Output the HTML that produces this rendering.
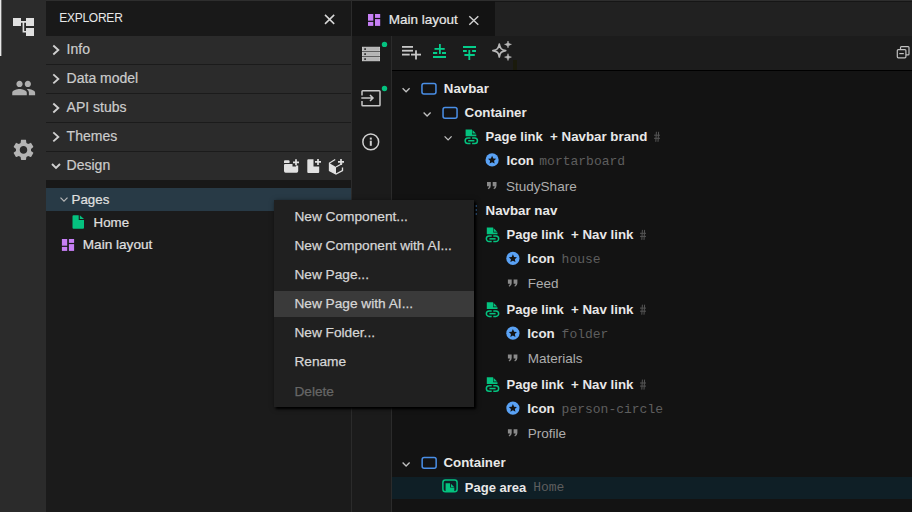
<!DOCTYPE html>
<html><head><meta charset="utf-8">
<style>
*{box-sizing:border-box;margin:0;padding:0}
html,body{width:912px;height:512px;overflow:hidden;background:#131313;font-family:"Liberation Sans",sans-serif;position:relative}
.a{position:absolute}
.t{position:absolute;white-space:pre;line-height:1;}
svg{position:absolute;overflow:visible}
</style></head><body>
<div class="a" style="left:0px;top:0px;width:912px;height:1px;background:#2e2e2e;"></div>
<div class="a" style="left:0px;top:0px;width:46px;height:512px;background:#2b2b2b;"></div>
<div class="a" style="left:0px;top:0px;width:1px;height:56px;background:#e8e8e8;"></div>
<div class="a" style="left:1px;top:0px;width:1px;height:56px;background:rgba(232,232,232,0.35);"></div>
<div class="a" style="left:46px;top:1px;width:305px;height:511px;background:#1b1b1b;"></div>
<div class="a" style="left:46px;top:1px;width:305px;height:35px;background:#191919;"></div>
<div class="a" style="left:46px;top:36px;width:305px;height:28px;background:#2b2b2b;"></div>
<div class="a" style="left:46px;top:65px;width:305px;height:28px;background:#2b2b2b;"></div>
<div class="a" style="left:46px;top:94px;width:305px;height:28px;background:#2b2b2b;"></div>
<div class="a" style="left:46px;top:123px;width:305px;height:28px;background:#2b2b2b;"></div>
<div class="a" style="left:46px;top:152px;width:305px;height:28px;background:#2b2b2b;"></div>
<div class="a" style="left:46px;top:180px;width:305px;height:8px;background:#181818;"></div>
<div class="a" style="left:46px;top:188px;width:305px;height:23px;background:#283a46;"></div>
<div class="a" style="left:351px;top:0px;width:1px;height:512px;background:#2b2b2b;"></div>
<div class="a" style="left:352px;top:1px;width:560px;height:35px;background:#212121;"></div>
<div class="a" style="left:352px;top:1px;width:560px;height:1px;background:#161616;"></div>
<div class="a" style="left:352px;top:1px;width:143px;height:35px;background:#131313;"></div>
<div class="a" style="left:352px;top:36px;width:39px;height:476px;background:#1b1b1b;"></div>
<div class="a" style="left:391px;top:36px;width:1px;height:476px;background:#2b2b2b;"></div>
<div class="a" style="left:392px;top:36px;width:520px;height:34px;background:#1c1c1c;"></div>
<div class="a" style="left:392px;top:70px;width:520px;height:1px;background:#000;"></div>
<div class="a" style="left:392px;top:477px;width:520px;height:22px;background:#0f1f26;"></div>
<svg style="left:0;top:0" width="46" height="46" viewBox="0 0 46 46">
<g fill="#e0e0e0"><rect x="13" y="18" width="8" height="8"/><rect x="26" y="18" width="8" height="8"/><rect x="26" y="28" width="8" height="8"/></g>
<path d="M21 21.9H26M23.4 21.9V31.8H26" stroke="#e0e0e0" stroke-width="1.6" fill="none"/>
</svg>
<svg style="left:0;top:60px" width="46" height="46" viewBox="0 60 46 46"><g transform="translate(11.2,75.6) scale(1.04)" fill="#b0b0b0">
<path d="M16 11c1.66 0 2.99-1.34 2.99-3S17.66 5 16 5c-1.66 0-3 1.34-3 3s1.34 3 3 3zm-8 0c1.66 0 2.99-1.34 2.99-3S9.66 5 8 5C6.34 5 5 6.34 5 8s1.34 3 3 3zm0 2c-2.33 0-7 1.17-7 3.5V19h14v-2.5c0-2.330-4.67-3.5-7-3.5zm8 0c-.29 0-.62.02-.97.05 1.16.84 1.970 1.97 1.97 3.45V19h6v-2.5c0-2.33-4.67-3.5-7-3.5z"/></g></svg>
<svg style="left:0;top:130px" width="46" height="46" viewBox="0 130 46 46"><g transform="translate(10.9,137.3) scale(1.05)" fill="#b4b4b4">
<path d="M19.14 12.94c.04-.3.06-.61.06-.94 0-.32-.02-.64-.07-.94l2.03-1.58c.18-.14.23-.41.12-.61l-1.92-3.32c-.12-.22-.37-.29-.59-.22l-2.39.96c-.5-.38-1.030-.7-1.62-.94l-.36-2.54c-.04-.24-.24-.41-.48-.41h-3.84c-.24 0-.43.17-.47.41l-.36 2.54c-.59.24-1.13.57-1.62.94l-2.39-.96c-.22-.08-.47 0-.59.22L2.74 8.87c-.12.21-.08.47.12.61l2.03 1.58c-.05.3-.09.63-.09.94s.02.64.07.94l-2.03 1.58c-.18.14-.23.41-.12.61l1.92 3.32c.12.22.37.29.59.22l2.39-.96c.5.38 1.03.7 1.62.94l.36 2.54c.05.24.24.41.48.41h3.84c.24 0 .44-.17.47-.41l.36-2.54c.59-.24 1.13-.56 1.62-.94l2.39.96c.22.08.47 0 .59-.22l1.92-3.32c.12-.22.07-.47-.12-.61l-2.01-1.58zM12 15.6c-1.98 0-3.6-1.62-3.6-3.6s1.62-3.6 3.6-3.6 3.6 1.62 3.6 3.6-1.62 3.6-3.6 3.6z"/></g></svg>
<div class="t" style="left:59.20px;top:11.60px;font-size:12px;color:#e8e8e8;letter-spacing:-0.25px;">EXPLORER</div>
<svg style="left:0;top:0" width="351" height="40"><path d="M325 14.9L334.2 23.9M334.2 14.9L325 23.9" stroke="#d8d8d8" stroke-width="1.5"/></svg>
<div class="t" style="left:66.60px;top:41.90px;font-size:14px;color:#cccccc;-webkit-text-stroke:0.2px currentColor;">Info</div>
<svg style="left:0;top:0" width="70" height="63"><path d="M53.3 45.5L58.3 50.0L53.3 54.5" stroke="#d0d0d0" stroke-width="1.9" fill="none"/></svg>
<div class="t" style="left:66.60px;top:70.80px;font-size:14px;color:#cccccc;-webkit-text-stroke:0.2px currentColor;">Data model</div>
<svg style="left:0;top:0" width="70" height="92"><path d="M53.3 74.4L58.3 78.9L53.3 83.4" stroke="#d0d0d0" stroke-width="1.9" fill="none"/></svg>
<div class="t" style="left:66.60px;top:99.90px;font-size:14px;color:#cccccc;-webkit-text-stroke:0.2px currentColor;">API stubs</div>
<svg style="left:0;top:0" width="70" height="121"><path d="M53.3 103.5L58.3 108.0L53.3 112.5" stroke="#d0d0d0" stroke-width="1.9" fill="none"/></svg>
<div class="t" style="left:66.60px;top:128.80px;font-size:14px;color:#cccccc;-webkit-text-stroke:0.2px currentColor;">Themes</div>
<svg style="left:0;top:0" width="70" height="150"><path d="M53.3 132.4L58.3 136.9L53.3 141.4" stroke="#d0d0d0" stroke-width="1.9" fill="none"/></svg>
<div class="t" style="left:66.60px;top:158.10px;font-size:14px;color:#cccccc;-webkit-text-stroke:0.2px currentColor;">Design</div>
<svg style="left:0;top:0" width="70" height="180"><path d="M52 164L56 168L60 164" stroke="#d0d0d0" stroke-width="1.9" fill="none"/></svg>
<svg style="left:276px;top:152px" width="75" height="28" viewBox="276 152 75 28" fill="#e0e0e0">
<path d="M284 161.2q0-1 1-1h3.5q1 0 1 1v1.8h-5.5z"/>
<path d="M284 165q0-1 1-1h7.5v2.6h3.5v-1.2h2.2v5.7q0 1.6-1.6 1.6h-11q-1.6 0-1.6-1.6z"/>
<path d="M296 159.3v6M293 162.3h6" stroke="#e0e0e0" stroke-width="1.7"/>
<path d="M307.3 160.2q0-1 1-1h5.2v7.3h5.7v5.5q0 1-1 1h-9.9q-1 0-1-1z"/>
<path d="M318 158.9v6M315 161.9h6" stroke="#e0e0e0" stroke-width="1.7"/>
<path d="M335.2 159.5L329.5 163v7.5l6.5 3.5l6.5-3.5v-3" stroke="#e0e0e0" stroke-width="1.3" fill="none"/>
<path d="M329.5 163.3l6.5 3.6v7.1l-6.5-3.5z"/>
<path d="M336 167l6.3-3.5" stroke="#e0e0e0" stroke-width="1.2" fill="none"/>
<path d="M341 158.9v6M338 161.9h6" stroke="#e0e0e0" stroke-width="1.7"/>
</svg>
<svg style="left:0;top:0" width="90" height="260"><path d="M60.5 197.6L64 201.2L67.5 197.6" stroke="#b8b8b8" stroke-width="1.2" fill="none"/></svg>
<div class="t" style="left:71.60px;top:192.89px;font-size:13.3px;color:#e0e0e0;-webkit-text-stroke:0.2px currentColor;">Pages</div>
<svg style="left:0;top:0" width="90" height="260" fill="#04c27f">
<path d="M73.5 215.3h5.2v4.8h5.3v7.7q0 1-1 1h-9.5q-1 0-1-1v-11.5q0-1 1-1z"/>
<path d="M79.8 215.3l4.2 3.8h-4.2z"/></svg>
<div class="t" style="left:93.60px;top:215.59px;font-size:13.3px;color:#e0e0e0;-webkit-text-stroke:0.2px currentColor;">Home</div>
<svg style="left:0;top:0" width="75" height="253" fill="#c77ff5">
<rect x="61.9" y="239" width="5.3" height="6.7"/><rect x="68.9" y="239" width="5.2" height="3.9"/>
<rect x="61.9" y="246.9" width="5.3" height="4"/><rect x="68.9" y="244.1" width="5.2" height="6.8"/></svg>
<div class="t" style="left:82.80px;top:237.94px;font-size:13.6px;color:#e0e0e0;-webkit-text-stroke:0.2px currentColor;">Main layout</div>
<svg style="left:0;top:0" width="382" height="28" fill="#c77ff5">
<rect x="368" y="14" width="5.3" height="6.7"/><rect x="375" y="14" width="5.2" height="3.9"/>
<rect x="368" y="21.9" width="5.3" height="4"/><rect x="375" y="19.1" width="5.2" height="6.8"/></svg>
<div class="t" style="left:388.80px;top:12.72px;font-size:13.5px;color:#e8e8e8;-webkit-text-stroke:0.2px currentColor;">Main layout</div>
<svg style="left:0;top:0" width="490" height="40"><path d="M469.3 16.2L478.3 24.8M478.3 16.2L469.3 24.8" stroke="#d0d0d0" stroke-width="1.4"/></svg>
<svg style="left:352px;top:36px" width="40" height="120" viewBox="352 36 40 120">
<g fill="#b4b4b4" stroke="#d0d0d0" stroke-width="0.8">
<rect x="362.4" y="47.2" width="17.2" height="3.6"/><rect x="362.4" y="52.2" width="17.2" height="3.6"/><rect x="362.4" y="57.2" width="17.2" height="3.6"/></g>
<g fill="#1b1b1b"><rect x="364.3" y="48.3" width="1.6" height="1.6"/><rect x="364.3" y="53.3" width="1.6" height="1.6"/><rect x="364.3" y="58.3" width="1.6" height="1.6"/></g>
<circle cx="384.5" cy="44.4" r="2.7" fill="#04c27f"/>
<circle cx="384.5" cy="88.5" r="2.7" fill="#04c27f"/>
<path d="M362 95.5V91.5q0-0.8 0.8-0.8h16.4q0.8 0 .8.8v13.5q0 .8-.8.8h-16.4q-.8 0-.8-.8v-4" stroke="#c8c8c8" stroke-width="1.5" fill="none"/>
<path d="M361.3 98H373M370 95l3 3l-3 3" stroke="#c8c8c8" stroke-width="1.5" fill="none"/>
<circle cx="370.75" cy="141.9" r="7.9" stroke="#d0d0d0" stroke-width="1.5" fill="none"/>
<rect x="369.8" y="137.6" width="2" height="2" fill="#d0d0d0"/><rect x="369.8" y="140.7" width="2" height="5.1" fill="#d0d0d0"/>
</svg>
<svg style="left:392px;top:36px" width="520" height="34" viewBox="392 36 520 34">
<g fill="#c8c8c8"><rect x="402" y="46" width="11" height="1.8"/><rect x="402" y="49.8" width="11" height="1.8"/><rect x="402" y="53.7" width="7.7" height="1.8"/><rect x="411" y="53.7" width="10" height="1.8"/><rect x="415.1" y="50.3" width="1.8" height="9.2"/></g>
<g fill="#05cd8b"><rect x="439" y="44" width="1.8" height="10"/><rect x="434.5" y="48" width="10.2" height="1.8"/><rect x="433" y="52" width="4.2" height="2"/><rect x="442" y="52" width="4" height="2"/><rect x="433" y="56" width="13" height="2"/>
<rect x="463" y="46" width="13" height="2"/><rect x="463" y="50" width="3.8" height="2"/><rect x="472.1" y="50" width="3.9" height="2"/><rect x="464.4" y="54" width="10.4" height="2"/><rect x="468.4" y="50" width="1.8" height="10"/></g>
<path d="M499.3 44.2C500 48.5 501.4 49.9 505.7 50.6C501.4 51.3 500 52.7 499.3 57C498.6 52.7 497.2 51.3 492.9 50.6C497.2 49.9 498.6 48.5 499.3 44.2Z" stroke="#b8b8b8" stroke-width="1.7" fill="none" stroke-linejoin="round"/>
<path d="M508 41C508.4 43.3 509.1 44 511.4 44.4C509.1 44.8 508.4 45.5 508 47.8C507.6 45.5 506.9 44.8 504.6 44.4C506.9 44 507.6 43.3 508 41Z" fill="#b8b8b8" stroke="#b8b8b8" stroke-width="0.6"/>
<path d="M508 53.7C508.4 56 509.1 56.7 511.4 57.1C509.1 57.5 508.4 58.2 508 60.5C507.6 58.2 506.9 57.5 504.6 57.1C506.9 56.7 507.6 56 508 53.7Z" fill="#b8b8b8" stroke="#b8b8b8" stroke-width="0.6"/>
<rect x="513" y="60" width="4" height="10" fill="#1a1a0c"/>
<g stroke="#c0c0c0" stroke-width="1.2" fill="none"><path d="M900.5 49V47.5q0-.9.9-.9h6.7q.9 0 .9.9v6.5q0 .9-.9.9H906"/><rect x="897.3" y="49.6" width="8.6" height="8.2" rx="1"/><path d="M899.3 53.6h4.5"/></g>
</svg>
<svg style="left:0;top:0" width="414" height="98"><path d="M402.6 88.3L406.1 91.8L409.6 88.3" stroke="#c0c0c0" stroke-width="1.3" fill="none"/></svg>
<svg style="left:0;top:0" width="439" height="98"><rect x="421.95" y="83.40" width="14" height="10.6" rx="2" stroke="#4a8fe7" stroke-width="1.5" fill="none"/></svg>
<div class="t" style="left:443.80px;top:82.00px;font-size:13.3px;color:#e8e8e8;font-weight:700;">Navbar</div>
<svg style="left:0;top:0" width="435" height="122"><path d="M423.6 112.5L427.1 116.0L430.6 112.5" stroke="#c0c0c0" stroke-width="1.3" fill="none"/></svg>
<svg style="left:0;top:0" width="460" height="122"><rect x="443.05" y="107.60" width="14" height="10.6" rx="2" stroke="#4a8fe7" stroke-width="1.5" fill="none"/></svg>
<div class="t" style="left:464.60px;top:106.19px;font-size:13.3px;color:#e8e8e8;font-weight:700;">Container</div>
<svg style="left:0;top:0" width="456" height="146"><path d="M444.6 136.4L448.1 139.9L451.6 136.4" stroke="#c0c0c0" stroke-width="1.3" fill="none"/></svg>
<svg style="left:0;top:0" width="482" height="146" fill="#04c27f">
<path d="M465.59999999999997 129.4h6.4v5h4.3v1.8h-10.7z"/>
<path d="M472.5 130.1l3.5 3.5h-3.5z"/>
<path d="M470.5 138.0h-2.6a2.75 2.75 0 0 0 0 5.5h2.6M472.09999999999997 138.0h2.6a2.75 2.75 0 0 1 0 5.5h-2.6" stroke="#04c27f" stroke-width="1.5" fill="none"/>
<rect x="468.2" y="140.00" width="6.2" height="1.5"/></svg>
<div class="t" style="left:485.60px;top:130.35px;font-size:13px;color:#e8e8e8;font-weight:700;">Page link</div>
<div class="t" style="left:550.10px;top:130.09px;font-size:13.3px;color:#e8e8e8;font-weight:700;">+ Navbar brand</div>
<svg style="left:0;top:0" width="664" height="146"><path d="M656.4 131.8L655.8 141.8M658.6 131.8L658 141.8M654 135.20000000000002H660M654 138.3H660" stroke="#555" stroke-width="1" fill="none"/></svg>
<svg style="left:0;top:0" width="501" height="170"><circle cx="492.1" cy="159.90" r="6.6" fill="#5aa2f5"/><polygon points="492.10,155.80 493.30,158.44 496.19,158.77 494.05,160.73 494.63,163.58 492.10,162.15 489.57,163.58 490.15,160.73 488.01,158.77 490.90,158.44" fill="#131313"/></svg>
<div class="t" style="left:506.60px;top:153.79px;font-size:13.3px;color:#e8e8e8;font-weight:700;">Icon</div>
<div class="t" style="left:539.30px;top:154.93px;font-size:13px;color:#5e5e5e;font-family:'Liberation Mono',monospace;">mortarboard</div>
<svg style="left:0;top:0" width="501" height="196" fill="#8a8a8a">
<path d="M487 182.1h3.8v3.6q0 2.6-2.4 3.6l-.7-1q1.2-.8 1.3-2.1h-2z"/>
<path d="M492.7 182.1h3.8v3.6q0 2.6-2.4 3.6l-.7-1q1.2-.8 1.3-2.1h-2z"/></svg>
<div class="t" style="left:506.10px;top:179.53px;font-size:13.5px;color:#adadad;">StudyShare</div>
<div class="t" style="left:485.60px;top:204.49px;font-size:13.3px;color:#e8e8e8;font-weight:700;">Navbar nav</div>
<svg style="left:0;top:0" width="480" height="220" fill="#3a6ea5"><rect x="475.2" y="205" width="1.8" height="2"/><rect x="475.2" y="209" width="1.8" height="2"/><rect x="475.2" y="213" width="1.8" height="2"/></svg>
<svg style="left:0;top:0" width="503" height="244" fill="#04c27f">
<path d="M486.79999999999995 227.5h6.4v5h4.3v1.8h-10.7z"/>
<path d="M493.7 228.2l3.5 3.5h-3.5z"/>
<path d="M491.7 236.1h-2.6a2.75 2.75 0 0 0 0 5.5h2.6M493.29999999999995 236.1h2.6a2.75 2.75 0 0 1 0 5.5h-2.6" stroke="#04c27f" stroke-width="1.5" fill="none"/>
<rect x="489.4" y="238.10" width="6.2" height="1.5"/></svg>
<div class="t" style="left:506.60px;top:228.45px;font-size:13px;color:#e8e8e8;font-weight:700;">Page link</div>
<div class="t" style="left:571.00px;top:228.19px;font-size:13.3px;color:#e8e8e8;font-weight:700;">+ Nav link</div>
<svg style="left:0;top:0" width="650" height="244"><path d="M642.4 229.9L641.8 239.9M644.6 229.9L644 239.9M640 233.3H646M640 236.4H646" stroke="#555" stroke-width="1" fill="none"/></svg>
<svg style="left:0;top:0" width="522" height="269"><circle cx="512.9" cy="258.40" r="6.6" fill="#5aa2f5"/><polygon points="512.90,254.30 514.10,256.94 516.99,257.27 514.85,259.23 515.43,262.08 512.90,260.65 510.37,262.08 510.95,259.23 508.81,257.27 511.70,256.94" fill="#131313"/></svg>
<div class="t" style="left:527.30px;top:252.30px;font-size:13.3px;color:#e8e8e8;font-weight:700;">Icon</div>
<div class="t" style="left:561.60px;top:253.43px;font-size:13px;color:#5e5e5e;font-family:'Liberation Mono',monospace;">house</div>
<svg style="left:0;top:0" width="521" height="293" fill="#8a8a8a">
<path d="M507.9 279.6h3.8v3.6q0 2.6-2.4 3.6l-.7-1q1.2-.8 1.3-2.1h-2z"/>
<path d="M513.6 279.6h3.8v3.6q0 2.6-2.4 3.6l-.7-1q1.2-.8 1.3-2.1h-2z"/></svg>
<div class="t" style="left:527.80px;top:277.02px;font-size:13.5px;color:#adadad;">Feed</div>
<svg style="left:0;top:0" width="503" height="319" fill="#04c27f">
<path d="M486.79999999999995 302.3h6.4v5h4.3v1.8h-10.7z"/>
<path d="M493.7 303.0l3.5 3.5h-3.5z"/>
<path d="M491.7 310.90000000000003h-2.6a2.75 2.75 0 0 0 0 5.5h2.6M493.29999999999995 310.90000000000003h2.6a2.75 2.75 0 0 1 0 5.5h-2.6" stroke="#04c27f" stroke-width="1.5" fill="none"/>
<rect x="489.4" y="312.90" width="6.2" height="1.5"/></svg>
<div class="t" style="left:506.60px;top:303.25px;font-size:13px;color:#e8e8e8;font-weight:700;">Page link</div>
<div class="t" style="left:571.00px;top:303.00px;font-size:13.3px;color:#e8e8e8;font-weight:700;">+ Nav link</div>
<svg style="left:0;top:0" width="650" height="319"><path d="M642.4 304.7L641.8 314.7M644.6 304.7L644 314.7M640 308.09999999999997H646M640 311.2H646" stroke="#555" stroke-width="1" fill="none"/></svg>
<svg style="left:0;top:0" width="522" height="343"><circle cx="512.9" cy="333.20" r="6.6" fill="#5aa2f5"/><polygon points="512.90,329.10 514.10,331.74 516.99,332.07 514.85,334.03 515.43,336.88 512.90,335.45 510.37,336.88 510.95,334.03 508.81,332.07 511.70,331.74" fill="#131313"/></svg>
<div class="t" style="left:527.30px;top:327.10px;font-size:13.3px;color:#e8e8e8;font-weight:700;">Icon</div>
<div class="t" style="left:561.60px;top:328.23px;font-size:13px;color:#5e5e5e;font-family:'Liberation Mono',monospace;">folder</div>
<svg style="left:0;top:0" width="521" height="368" fill="#8a8a8a">
<path d="M507.9 354.40000000000003h3.8v3.6q0 2.6-2.4 3.6l-.7-1q1.2-.8 1.3-2.1h-2z"/>
<path d="M513.6 354.40000000000003h3.8v3.6q0 2.6-2.4 3.6l-.7-1q1.2-.8 1.3-2.1h-2z"/></svg>
<div class="t" style="left:527.80px;top:351.82px;font-size:13.5px;color:#adadad;">Materials</div>
<svg style="left:0;top:0" width="503" height="394" fill="#04c27f">
<path d="M486.79999999999995 377.20000000000005h6.4v5h4.3v1.8h-10.7z"/>
<path d="M493.7 377.90000000000003l3.5 3.5h-3.5z"/>
<path d="M491.7 385.80000000000007h-2.6a2.75 2.75 0 0 0 0 5.5h2.6M493.29999999999995 385.80000000000007h2.6a2.75 2.75 0 0 1 0 5.5h-2.6" stroke="#04c27f" stroke-width="1.5" fill="none"/>
<rect x="489.4" y="387.80" width="6.2" height="1.5"/></svg>
<div class="t" style="left:506.60px;top:378.15px;font-size:13px;color:#e8e8e8;font-weight:700;">Page link</div>
<div class="t" style="left:571.00px;top:377.90px;font-size:13.3px;color:#e8e8e8;font-weight:700;">+ Nav link</div>
<svg style="left:0;top:0" width="650" height="394"><path d="M642.4 379.6L641.8 389.6M644.6 379.6L644 389.6M640 383.0H646M640 386.1H646" stroke="#555" stroke-width="1" fill="none"/></svg>
<svg style="left:0;top:0" width="522" height="418"><circle cx="512.9" cy="408.10" r="6.6" fill="#5aa2f5"/><polygon points="512.90,404.00 514.10,406.64 516.99,406.97 514.85,408.93 515.43,411.78 512.90,410.35 510.37,411.78 510.95,408.93 508.81,406.97 511.70,406.64" fill="#131313"/></svg>
<div class="t" style="left:527.30px;top:402.00px;font-size:13.3px;color:#e8e8e8;font-weight:700;">Icon</div>
<div class="t" style="left:561.60px;top:403.13px;font-size:13px;color:#5e5e5e;font-family:'Liberation Mono',monospace;">person-circle</div>
<svg style="left:0;top:0" width="521" height="443" fill="#8a8a8a">
<path d="M507.9 429.30000000000007h3.8v3.6q0 2.6-2.4 3.6l-.7-1q1.2-.8 1.3-2.1h-2z"/>
<path d="M513.6 429.30000000000007h3.8v3.6q0 2.6-2.4 3.6l-.7-1q1.2-.8 1.3-2.1h-2z"/></svg>
<div class="t" style="left:527.80px;top:426.73px;font-size:13.5px;color:#adadad;">Profile</div>
<svg style="left:0;top:0" width="414" height="472"><path d="M402.6 462.5L406.1 466.0L409.6 462.5" stroke="#c0c0c0" stroke-width="1.3" fill="none"/></svg>
<svg style="left:0;top:0" width="439" height="472"><rect x="422.15" y="457.60" width="14" height="10.6" rx="2" stroke="#4a8fe7" stroke-width="1.5" fill="none"/></svg>
<div class="t" style="left:443.50px;top:456.19px;font-size:13.3px;color:#e8e8e8;font-weight:700;">Container</div>
<svg style="left:0;top:0" width="470" height="500">
<rect x="442.9" y="479.9" width="14.2" height="11.9" rx="2.5" stroke="#04c27f" stroke-width="1.5" fill="none"/>
<path d="M445.6 483.3h4.4v4.1h4.3v4.5h-8.7z" fill="#04c27f"/><path d="M450.9 483.8l3.2 3.1h-3.2z" fill="#04c27f"/></svg>
<div class="t" style="left:464.80px;top:480.55px;font-size:13px;color:#e8e8e8;font-weight:700;">Page area</div>
<div class="t" style="left:533.20px;top:481.43px;font-size:13px;color:#5e5e5e;font-family:'Liberation Mono',monospace;">Home</div>
<div class="a" style="left:274px;top:200px;width:200px;height:207px;background:#202020;box-shadow:2px 2px 2px rgba(0,0,0,1),1px 1px 5px rgba(0,0,0,0.5);"></div>
<div class="a" style="left:274px;top:291px;width:200px;height:26px;background:#3a3a3a;"></div>
<div class="t" style="left:294.40px;top:210.46px;font-size:13.7px;color:#d6d6d6;-webkit-text-stroke:0.25px currentColor;">New Component...</div>
<div class="t" style="left:294.40px;top:239.16px;font-size:13.7px;color:#d6d6d6;-webkit-text-stroke:0.25px currentColor;">New Component with AI...</div>
<div class="t" style="left:294.40px;top:267.66px;font-size:13.7px;color:#d6d6d6;-webkit-text-stroke:0.25px currentColor;">New Page...</div>
<div class="t" style="left:294.40px;top:297.36px;font-size:13.7px;color:#d6d6d6;-webkit-text-stroke:0.25px currentColor;">New Page with AI...</div>
<div class="t" style="left:294.40px;top:326.16px;font-size:13.7px;color:#d6d6d6;-webkit-text-stroke:0.25px currentColor;">New Folder...</div>
<div class="t" style="left:294.40px;top:355.16px;font-size:13.7px;color:#d6d6d6;-webkit-text-stroke:0.25px currentColor;">Rename</div>
<div class="t" style="left:294.40px;top:385.26px;font-size:13.7px;color:#666666;-webkit-text-stroke:0.25px currentColor;">Delete</div>
</body></html>
